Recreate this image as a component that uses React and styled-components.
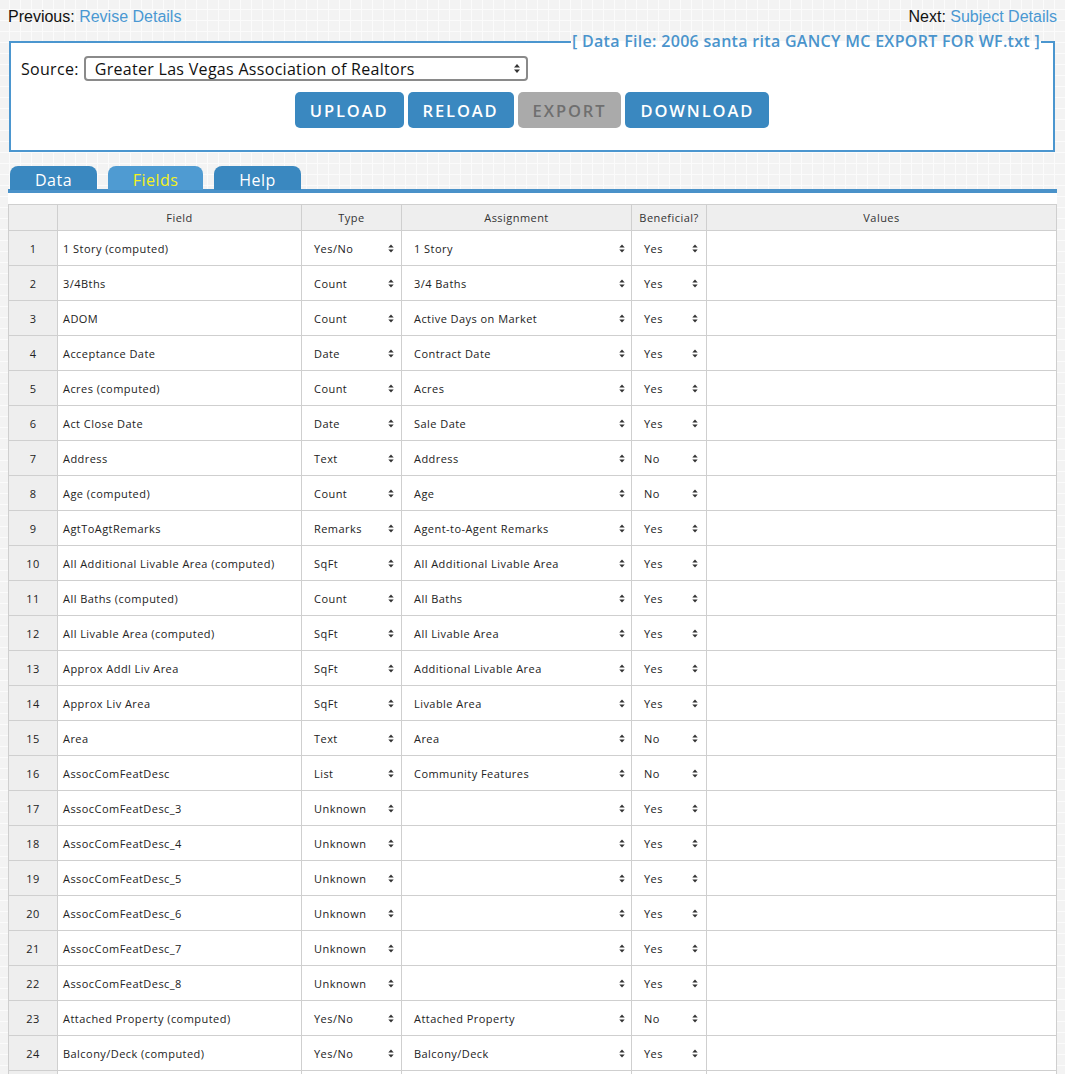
import React from "react";
import styled, { createGlobalStyle } from "styled-components";

const UI = `"Open Sans", "Noto Sans", sans-serif`;
const BLUE = "#3a88c0";

const Global = createGlobalStyle`
  html, body { margin: 0; padding: 0; }
  body {
    margin: 8px;
    font-family: "Liberation Sans", Arial, sans-serif;
    background-color: #f3f3f3;
    background-image:
      linear-gradient(#fbfbfb 1px, transparent 1px),
      linear-gradient(90deg, #fbfbfb 1px, transparent 1px);
    background-size: 11px 11px;
    background-position: -2px -2px;
  }
`;

const NavBar = styled.div`
  display: flex;
  justify-content: space-between;
  font-size: 16px;
  line-height: 18px;
  color: #111;
`;
const NavLink = styled.a`
  color: #4a98d2;
  text-decoration: none;
`;

const Box = styled.fieldset`
  margin: 7px 2px 0 1px;
  border: 2px solid #4b96cf;
  background: #fff;
  padding: 6px 10px 22px 10px;
  min-width: 0;
`;
const Legend = styled.legend`
  margin-left: auto;
  margin-right: 2px;
  padding: 0 1px;
  font-family: ${UI};
  font-weight: 600;
  font-size: 16px;
  letter-spacing: 0.3px;
  line-height: 17px;
  color: #4a94cc;
`;
const SourceRow = styled.div`
  display: flex;
  align-items: center;
  gap: 5px;
  font-family: ${UI};
  font-size: 16px;
  letter-spacing: 0.3px;
  color: #111;
`;
const BigSelect = styled.div`
  width: 444px;
  height: 25px;
  box-sizing: border-box;
  border: 2px solid #8a8a8a;
  border-radius: 4px;
  display: flex;
  align-items: center;
  justify-content: space-between;
  padding: 0 6px 0 9px;
  font-family: ${UI};
  font-size: 16px;
  letter-spacing: 0.3px;
  color: #111;
`;
const Buttons = styled.div`
  display: flex;
  justify-content: center;
  gap: 4px;
  margin-top: 11px;
`;
const Btn = styled.button`
  height: 36px;
  padding: 0 15px;
  border: none;
  border-radius: 5px;
  background: ${(p) => (p.$disabled ? "#aaaaaa" : BLUE)};
  color: ${(p) => (p.$disabled ? "#6f6f6f" : "#fff")};
  font-family: ${UI};
  font-weight: 600;
  font-size: 16.5px;
  letter-spacing: 1.9px;
  cursor: pointer;
`;

const Tabs = styled.div`
  display: flex;
  gap: 11px;
  padding-left: 2px;
  margin-top: 14px;
  height: 23px;
  border-bottom: 4px solid #4a92c9;
`;
const Tab = styled.div`
  width: ${(p) => p.$w}px;
  height: 24px;
  border-radius: 8px 8px 0 0;
  background: ${(p) => (p.$active ? "#4f9bd2" : BLUE)};
  color: ${(p) => (p.$active ? "#f6f21c" : "#fff")};
  font-family: ${UI};
  font-size: 16px;
  letter-spacing: 0.5px;
  display: flex;
  align-items: center;
  justify-content: center;
  padding-top: 3px;
  box-sizing: border-box;
`;
const Panel = styled.div`
  background: #fff;
  padding-top: 11px;
`;
const Table = styled.table`
  width: 100%;
  border-collapse: collapse;
  table-layout: fixed;
  font-family: ${UI};
  font-size: 11px;
  letter-spacing: 0.45px;
  color: #222;
`;
const Th = styled.th`
  background: #eeeeee;
  border: 1px solid #cfcfcf;
  height: 25px;
  font-weight: 400;
  color: #333;
  padding: 0;
`;
const NumTd = styled.td`
  background: #eeeeee;
  border: 1px solid #cfcfcf;
  height: 34px;
  text-align: center;
  padding: 0;
`;
const Td = styled.td`
  border: 1px solid #cfcfcf;
  height: 34px;
  padding: 0 0 0 ${(p) => p.$pl || 0}px;
  white-space: nowrap;
  overflow: hidden;
`;
const CellSelect = styled.div`
  display: flex;
  align-items: center;
  justify-content: space-between;
  padding: 0 ${(p) => p.$pr || 7}px 0 12px;
`;

const Arrows = ({ h = 9 }) => (
  <svg width="6" height={h} viewBox="0 0 6 10" style={{ flex: "none" }}>
    <polygon points="0,4 3,0.5 6,4" fill="#333" />
    <polygon points="0,6 3,9.5 6,6" fill="#333" />
  </svg>
);

const rows = [
  ["1 Story (computed)", "Yes/No", "1 Story", "Yes"],
  ["3/4Bths", "Count", "3/4 Baths", "Yes"],
  ["ADOM", "Count", "Active Days on Market", "Yes"],
  ["Acceptance Date", "Date", "Contract Date", "Yes"],
  ["Acres (computed)", "Count", "Acres", "Yes"],
  ["Act Close Date", "Date", "Sale Date", "Yes"],
  ["Address", "Text", "Address", "No"],
  ["Age (computed)", "Count", "Age", "No"],
  ["AgtToAgtRemarks", "Remarks", "Agent-to-Agent Remarks", "Yes"],
  ["All Additional Livable Area (computed)", "SqFt", "All Additional Livable Area", "Yes"],
  ["All Baths (computed)", "Count", "All Baths", "Yes"],
  ["All Livable Area (computed)", "SqFt", "All Livable Area", "Yes"],
  ["Approx Addl Liv Area", "SqFt", "Additional Livable Area", "Yes"],
  ["Approx Liv Area", "SqFt", "Livable Area", "Yes"],
  ["Area", "Text", "Area", "No"],
  ["AssocComFeatDesc", "List", "Community Features", "No"],
  ["AssocComFeatDesc_3", "Unknown", "", "Yes"],
  ["AssocComFeatDesc_4", "Unknown", "", "Yes"],
  ["AssocComFeatDesc_5", "Unknown", "", "Yes"],
  ["AssocComFeatDesc_6", "Unknown", "", "Yes"],
  ["AssocComFeatDesc_7", "Unknown", "", "Yes"],
  ["AssocComFeatDesc_8", "Unknown", "", "Yes"],
  ["Attached Property (computed)", "Yes/No", "Attached Property", "No"],
  ["Balcony/Deck (computed)", "Yes/No", "Balcony/Deck", "Yes"],
];

export default function App() {
  return (
    <>
      <Global />
      <NavBar>
        <span>
          Previous: <NavLink href="#">Revise Details</NavLink>
        </span>
        <span>
          Next: <NavLink href="#">Subject Details</NavLink>
        </span>
      </NavBar>
      <Box>
        <Legend>[ Data File: 2006 santa rita GANCY MC EXPORT FOR WF.txt ]</Legend>
        <SourceRow>
          <span>Source:</span>
          <BigSelect>
            <span>Greater Las Vegas Association of Realtors</span>
            <Arrows h={11} />
          </BigSelect>
        </SourceRow>
        <Buttons>
          <Btn>UPLOAD</Btn>
          <Btn>RELOAD</Btn>
          <Btn $disabled>EXPORT</Btn>
          <Btn>DOWNLOAD</Btn>
        </Buttons>
      </Box>
      <Tabs>
        <Tab $w={87}>Data</Tab>
        <Tab $w={95} $active>Fields</Tab>
        <Tab $w={87}>Help</Tab>
      </Tabs>
      <Panel>
        <Table>
          <colgroup>
            <col style={{ width: 49 }} />
            <col style={{ width: 244 }} />
            <col style={{ width: 100 }} />
            <col style={{ width: 230 }} />
            <col style={{ width: 75 }} />
            <col />
          </colgroup>
          <thead>
            <tr>
              <Th></Th>
              <Th>Field</Th>
              <Th>Type</Th>
              <Th>Assignment</Th>
              <Th>Beneficial?</Th>
              <Th>Values</Th>
            </tr>
          </thead>
          <tbody>
            {rows.map((r, i) => (
              <tr key={i}>
                <NumTd>{i + 1}</NumTd>
                <Td $pl={5}>{r[0]}</Td>
                <Td>
                  <CellSelect $pr={7}>
                    <span>{r[1]}</span>
                    <Arrows />
                  </CellSelect>
                </Td>
                <Td>
                  <CellSelect $pr={6}>
                    <span>{r[2]}</span>
                    <Arrows />
                  </CellSelect>
                </Td>
                <Td>
                  <CellSelect $pr={8}>
                    <span>{r[3]}</span>
                    <Arrows />
                  </CellSelect>
                </Td>
                <Td></Td>
              </tr>
            ))}
            <tr>
              <NumTd />
              <Td />
              <Td />
              <Td />
              <Td />
              <Td />
            </tr>
          </tbody>
        </Table>
      </Panel>
    </>
  );
}
